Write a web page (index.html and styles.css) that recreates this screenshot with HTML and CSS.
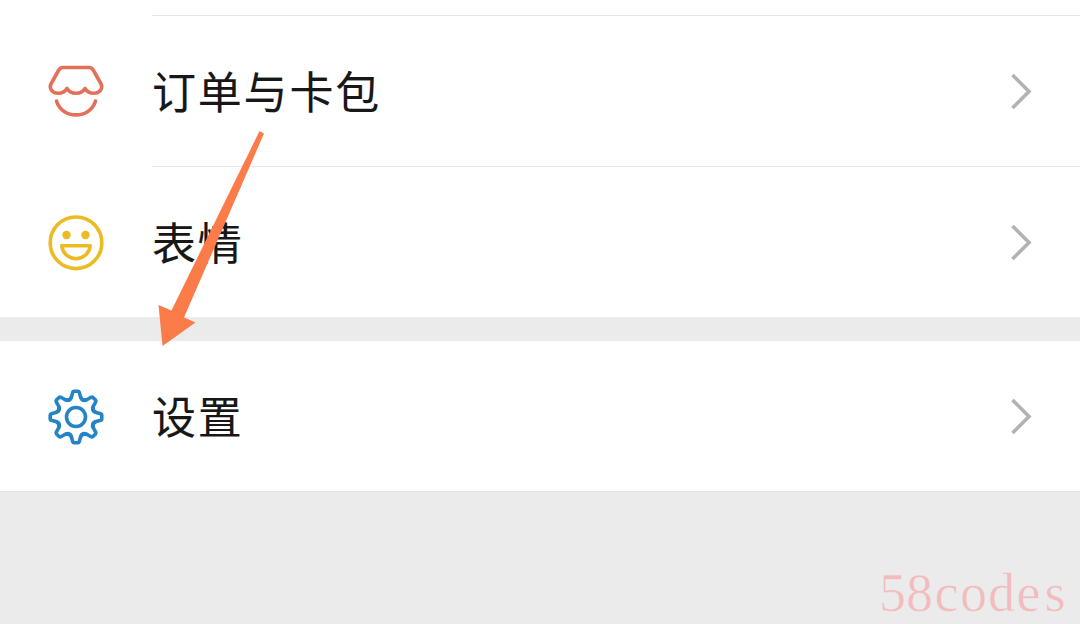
FILE: index.html
```html
<!DOCTYPE html>
<html lang="zh-CN">
<head>
<meta charset="utf-8">
<title>设置</title>
<link rel="stylesheet" href="styles.css">
</head>
<body>
<main class="page">
  <nav class="group group-first">
    <a class="row">
      <svg class="icon orders" viewBox="0 0 80 80"><path d="M27 16.500H53Q56 16.500 57.500 19.500L64.500 32C68 38 63 42.200 58 42.200Q52 42.200 49 37.500Q46 42.200 40 42.200Q34 42.200 31 37.500Q28 42.200 22 42.200C17 42.200 12 38 15.500 32L22.500 19.500Q24 16.500 27 16.500ZM20.500 50C26 68.500 54 68.500 59.500 50"/></svg>
      <span class="label">订单与卡包</span>
      <svg class="chevron" viewBox="0 0 24 40"><path d="M3.500 4 20 20.500 3.500 37"/></svg>
    </a>
    <a class="row">
      <svg class="icon smile" viewBox="0 0 80 80"><circle cx="40" cy="40.800" r="25.800"/><path d="M25.800 43.700H54.200C52 61 28 61 25.800 43.700Z"/><circle class="eye" cx="30.500" cy="33" r="4.200"/><circle class="eye" cx="49.500" cy="33" r="4.200"/></svg>
      <span class="label">表情</span>
      <svg class="chevron" viewBox="0 0 24 40"><path d="M3.500 4 20 20.500 3.500 37"/></svg>
    </a>
  </nav>
  <nav class="group">
    <a class="row">
      <svg class="icon gear" viewBox="-40 -41 80 80"><defs><path id="tooth" d="M-9.900-17.200Q-6.100-16-4.700-19.400L-3.300-24.600Q-2.900-25.800-1.900-25.800H1.900Q2.900-25.800 3.300-24.600L4.700-19.400Q6.100-16 9.900-17.200"/></defs><use href="#tooth"/><use href="#tooth" transform="rotate(45)"/><use href="#tooth" transform="rotate(90)"/><use href="#tooth" transform="rotate(135)"/><use href="#tooth" transform="rotate(180)"/><use href="#tooth" transform="rotate(225)"/><use href="#tooth" transform="rotate(270)"/><use href="#tooth" transform="rotate(315)"/><circle r="9.500"/></svg>
      <span class="label">设置</span>
      <svg class="chevron" viewBox="0 0 24 40"><path d="M3.500 4 20 20.500 3.500 37"/></svg>
    </a>
  </nav>
  <footer class="footer">
    <svg class="watermark" viewBox="0 0 200 60"><text x="-1 26 54.500 80 108 136.500 164.500" y="47">58codes</text></svg>
  </footer>
  <svg class="arrow" viewBox="0 0 140 240"><path d="M119.500 11 124 13.500 44 197.500 55.500 202.500 22.500 226 18.500 185 31.500 190.500Z"/></svg>
</main>
</body>
</html>
```
FILE: styles.css
```css
body {
  margin: 0;
  background: #ebebeb;
  font-family: "Noto Sans CJK SC", sans-serif;
}
.page {
  position: relative;
  display: flex;
  flex-direction: column;
  height: 624px;
  overflow: hidden;
}
.group {
  background: #fff;
  margin-bottom: 24px;
}
.group:nth-of-type(2) {
  margin-bottom: 0;
}
.group-first {
  padding-top: 15px;
}
.row {
  display: flex;
  align-items: center;
  box-sizing: border-box;
  height: 150px;
  padding: 0 47px 0 36px;
}
.group-first .row {
  height: 151px;
  background: linear-gradient(#e5e5e5, #e5e5e5) 152px 0 / 100% 1px no-repeat;
}
.icon {
  width: 80px;
  height: 80px;
  fill: none;
  stroke-width: 3.600;
  stroke-linejoin: round;
  stroke-linecap: round;
}
.orders { stroke: #e2705b; }
.smile { stroke: #ebbb21; }
.smile .eye { fill: #ebbb21; stroke: none; }
.gear { stroke: #2484c6; }
.label {
  flex: 1;
  margin-left: 36px;
  padding-bottom: 2px;
  font-size: 44px;
  line-height: 64px;
  letter-spacing: 1.8px;
  color: #171717;
  -webkit-text-stroke: 0.1px #171717;
}
.chevron {
  width: 24px;
  height: 40px;
  fill: none;
  stroke: #b2b2b2;
  stroke-width: 3.600;
}
.footer {
  flex: 1;
  display: flex;
  justify-content: flex-end;
  align-items: flex-end;
  border-top: 1px solid #e5e5e5;
}
.watermark {
  width: 200px;
  height: 60px;
  overflow: visible;
}
.watermark text {
  font-family: "Liberation Serif", serif;
  font-size: 54px;
  fill: #f2bcbe;
  stroke: #ebebeb;
  stroke-width: 0.500px;
}
.arrow {
  position: absolute;
  left: 140px;
  top: 120px;
  width: 140px;
  height: 240px;
  fill: #fc7c49;
}
```
